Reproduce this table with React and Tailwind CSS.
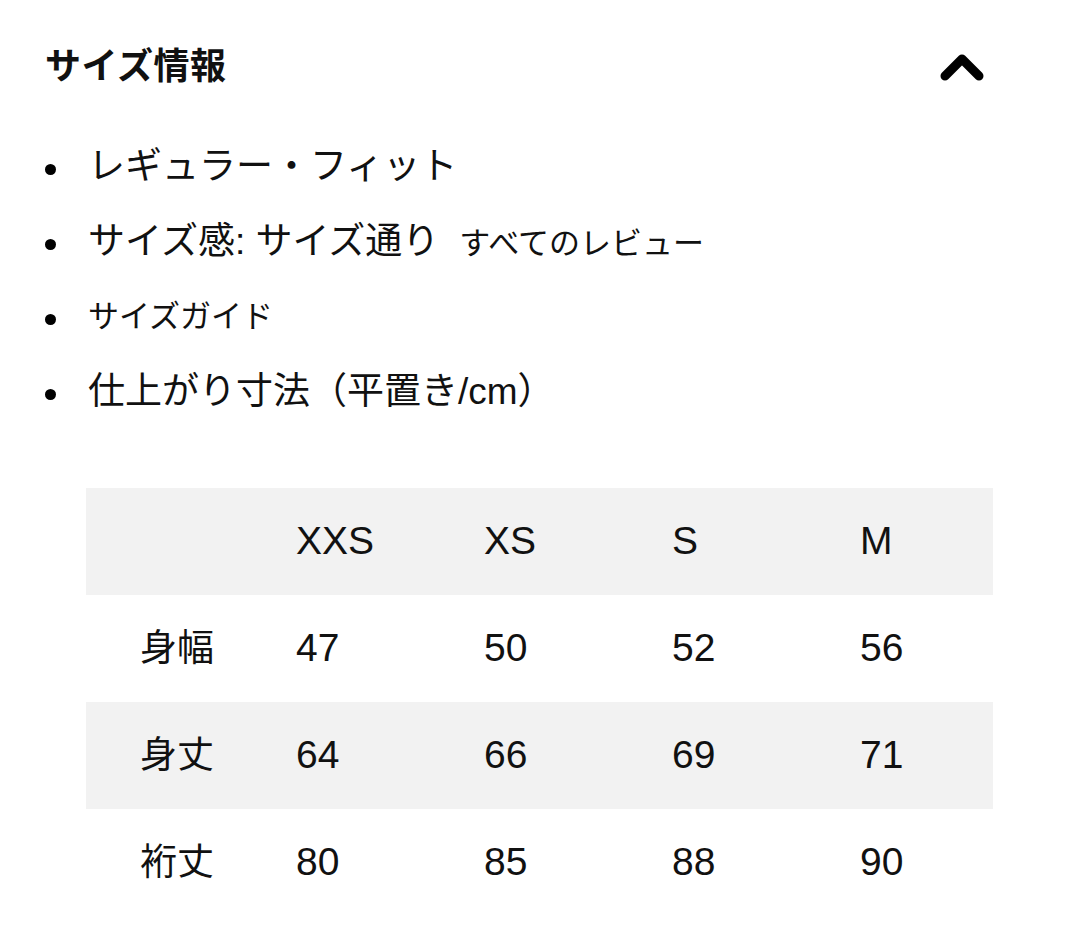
import { } from 'react';

const jp = { fontFamily: '"Liberation Sans", "Noto Sans CJK JP", sans-serif' };

const sizes = ['XXS', 'XS', 'S', 'M'];
const rows = [
  { label: '身幅', values: ['47', '50', '52', '56'] },
  { label: '身丈', values: ['64', '66', '69', '71'] },
  { label: '裄丈', values: ['80', '85', '88', '90'] },
];

function Chevron() {
  return (
    <svg width="46" height="30" viewBox="0 0 46 30" fill="none">
      <polyline points="6,24 23,7 40,24" stroke="#000" strokeWidth="9" strokeLinecap="round" strokeLinejoin="round" />
    </svg>
  );
}

function Bullet({ children }) {
  return (
    <li className="flex items-center h-[75px]">
      <span className="w-[11px] h-[11px] rounded-full bg-black ml-[45px] mr-[32px] mt-[6px] shrink-0" />
      <div className="flex items-baseline">{children}</div>
    </li>
  );
}

export default function App() {
  return (
    <div className="w-[1080px] h-[943px] bg-white text-[#111] overflow-hidden" style={jp}>
      <div className="flex items-center justify-between h-[44px] mt-[45px] pl-[45px] pr-[95px]">
        <h2 className="text-[36px] font-bold leading-none tracking-[0.5px]">サイズ情報</h2>
        <Chevron />
      </div>

      <ul className="mt-[40px]">
        <Bullet>
          <span className="text-[37px] leading-none">レギュラー・フィット</span>
        </Bullet>
        <Bullet>
          <span className="text-[37px] leading-none">サイズ感: サイズ通り</span>
          <span className="text-[31px] leading-none ml-[20px]">すべてのレビュー</span>
        </Bullet>
        <Bullet>
          <span className="text-[31px] leading-none">サイズガイド</span>
        </Bullet>
        <Bullet>
          <span className="text-[37px] leading-none">仕上がり寸法（平置き/cm）</span>
        </Bullet>
      </ul>

      <div className="ml-[86px] w-[907px] mt-[59px]">
        <div className="grid grid-cols-[210px_188px_188px_188px_1fr] h-[107px] items-center bg-[#f2f2f2] text-[39px]">
          <div />
          {sizes.map((s) => (
            <div key={s}>{s}</div>
          ))}
        </div>
        {rows.map((r, i) => (
          <div
            key={r.label}
            className={`grid grid-cols-[210px_188px_188px_188px_1fr] h-[107px] items-center text-[39px] ${i % 2 === 1 ? 'bg-[#f2f2f2]' : 'bg-white'}`}
          >
            <div className="pl-[54px] text-[37px]">{r.label}</div>
            {r.values.map((v, j) => (
              <div key={j}>{v}</div>
            ))}
          </div>
        ))}
      </div>
    </div>
  );
}
